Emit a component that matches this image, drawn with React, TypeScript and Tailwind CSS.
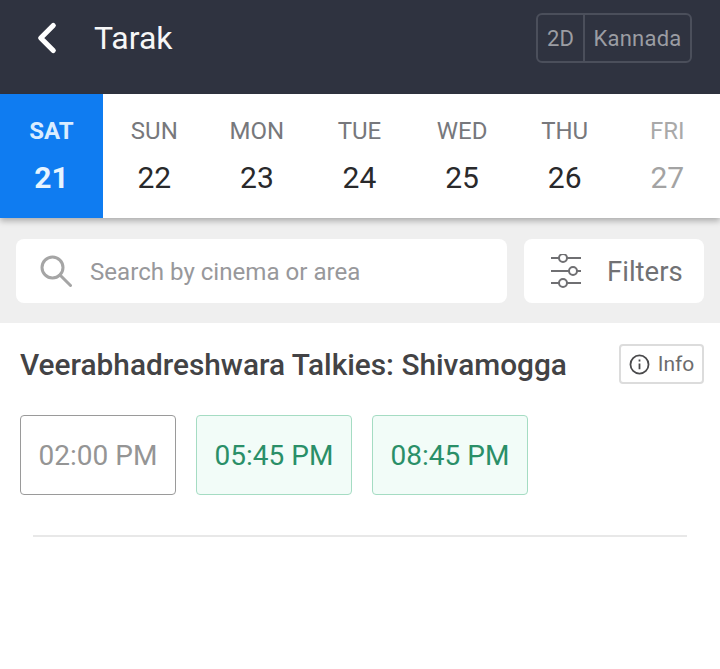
import { ChevronLeft } from 'lucide-react';

const days = [
  { name: 'SAT', num: 21, state: 'active' },
  { name: 'SUN', num: 22, state: 'open' },
  { name: 'MON', num: 23, state: 'open' },
  { name: 'TUE', num: 24, state: 'open' },
  { name: 'WED', num: 25, state: 'open' },
  { name: 'THU', num: 26, state: 'open' },
  { name: 'FRI', num: 27, state: 'off' },
];

const nameColors: Record<string, string> = {
  active: 'text-[#d9ecff] font-bold',
  open: 'text-[#77787c]',
  off: 'text-[#a9a9a9]',
};

const numColors: Record<string, string> = {
  active: 'text-[#e6f4ff] font-bold',
  open: 'text-[#29292b]',
  off: 'text-[#a3a3a3]',
};

const times = [
  { label: '02:00 PM', box: 'border-[#9a9a9a] bg-white text-[#959595]' },
  { label: '05:45 PM', box: 'border-[#a5dcc3] bg-[#f2fcf8] text-[#2a8f68]' },
  { label: '08:45 PM', box: 'border-[#a5dcc3] bg-[#f2fcf8] text-[#2a8f68]' },
];

function SearchIcon() {
  return (
    <svg width="32" height="32" viewBox="0 0 32 32" fill="none" stroke="#a5a5a5" strokeWidth="3">
      <circle cx="12.5" cy="12.5" r="10.5" />
      <path d="M20 20l10.5 10.5" strokeLinecap="round" />
    </svg>
  );
}

function FiltersIcon() {
  return (
    <svg width="32" height="34" viewBox="0 0 32 34" fill="none" stroke="#6f6f72" strokeWidth="2">
      <path d="M1 4h8M17 4h14M1 17h18M27 17h4M1 29h8M17 29h14" />
      <circle cx="13" cy="4" r="4" />
      <circle cx="23" cy="17" r="4" />
      <circle cx="13" cy="29" r="4" />
    </svg>
  );
}

function InfoIcon() {
  return (
    <svg width="21" height="21" viewBox="0 0 20 20" fill="none" stroke="#4a4a4c" strokeWidth="1.7">
      <circle cx="10" cy="10" r="8.6" />
      <path d="M10 9v5.5M10 5.2v2" />
    </svg>
  );
}

export default function App() {
  return (
    <div className="w-[720px] h-[669px] overflow-hidden bg-white font-['Roboto',sans-serif]">
      {/* Header */}
      <div className="h-[94px] bg-[#2f3340] flex items-start justify-between pl-[22px] pr-[28px]">
        <div className="flex items-center h-[76px]">
          <ChevronLeft size={50} strokeWidth={2.5} className="text-white" />
          <span className="ml-[22px] text-[32px] text-[#f7f7f7]">Tarak</span>
        </div>
        <div className="flex h-[50px] mt-[13px] rounded-[6px] border-2 border-[#4b4f5b] text-[22px] text-[#9b9da3]">
          <span className="w-[47px] flex items-center justify-center border-r-2 border-[#4b4f5b]">2D</span>
          <span className="w-[105px] flex items-center justify-center tracking-[0.2px]">Kannada</span>
        </div>
      </div>

      {/* Date strip */}
      <div className="relative z-10 h-[124px] bg-white grid grid-cols-[103px_repeat(6,102.6px)] shadow-[0_3px_6px_rgba(0,0,0,0.28)]">
        {days.map((d) => (
          <div
            key={d.num}
            className={`flex flex-col items-center pt-[21px] ${d.state === 'active' ? 'bg-[#0f7cf1]' : ''}`}
          >
            <span className={`text-[24px] leading-[32px] ${nameColors[d.state]}`}>{d.name}</span>
            <span className={`mt-[13px] text-[30px] leading-[36px] ${numColors[d.state]}`}>{d.num}</span>
          </div>
        ))}
      </div>

      {/* Search and filters */}
      <div className="h-[105px] bg-[#efefef] flex gap-[17px] px-[16px] pt-[21px]">
        <div className="w-[491px] h-[64px] bg-white rounded-[8px] flex items-center pl-[24px]">
          <SearchIcon />
          <span className="ml-[18px] mt-[2px] text-[24.1px] text-[#98989b]">Search by cinema or area</span>
        </div>
        <div className="w-[180px] h-[64px] bg-white rounded-[8px] flex items-center pl-[26px]">
          <FiltersIcon />
          <span className="ml-[25px] mt-[2px] text-[27.5px] text-[#717174]">Filters</span>
        </div>
      </div>

      {/* Cinema */}
      <div className="px-[20px]">
        <div className="flex items-start justify-between pt-[21px]">
          <h1 className="text-[29.8px] leading-[42px] font-medium text-[#434345]">
            Veerabhadreshwara Talkies: Shivamogga
          </h1>
          <div className="w-[85px] h-[40px] border-2 border-[#dcdcdc] rounded-[4px] flex items-center justify-center gap-[8px] text-[21px] text-[#6c6c6e] -mr-[4px]">
            <InfoIcon />
            <span className="mt-[2px]">Info</span>
          </div>
        </div>
        <div className="flex gap-[20px] mt-[29px]">
          {times.map((t) => (
            <div
              key={t.label}
              className={`w-[156px] h-[80px] pt-[2px] rounded-[4px] border-[1.5px] flex items-center justify-center text-[28px] ${t.box}`}
            >
              {t.label}
            </div>
          ))}
        </div>
        <div className="h-[1.5px] bg-[#e8e8e8] mt-[40px] mx-[13px]" />
      </div>
    </div>
  );
}
